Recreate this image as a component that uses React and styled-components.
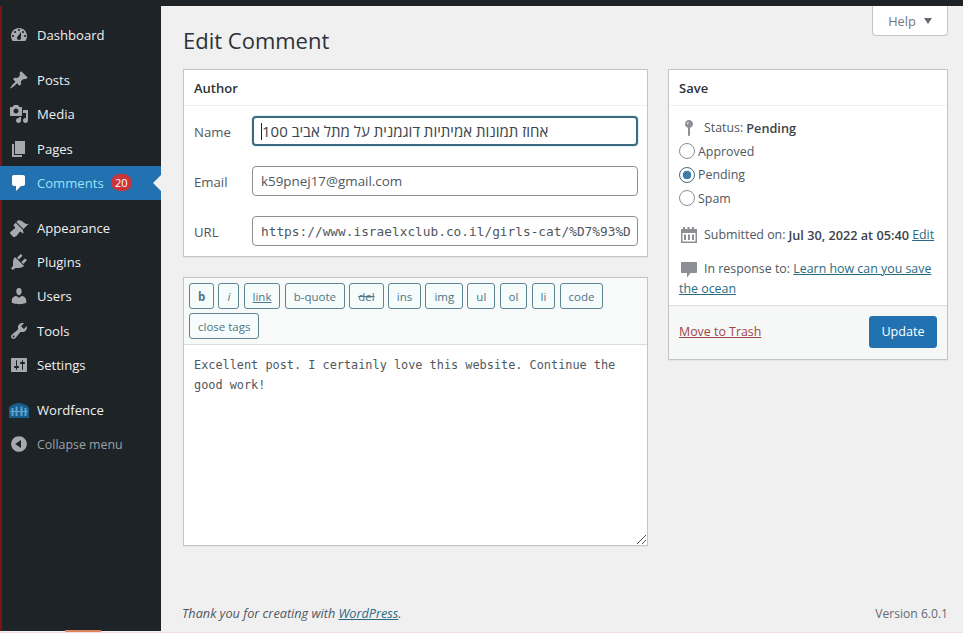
import React from "react";
import styled, { createGlobalStyle } from "styled-components";

const GlobalStyle = createGlobalStyle`
    html, body {
        margin: 0;
        padding: 0;
        height: 633px;
        overflow: hidden;
        background: #f0f0f1;
    }
    body {
        font-family: "Open Sans", "Noto Sans", sans-serif;
        font-size: 13px;
        color: #3c434a;
    }
    * {
        box-sizing: border-box;
    }
`;

const icons = {
    dashboard:
        "M3.76 16h12.48c1.1-1.37 1.76-3.11 1.76-5 0-4.42-3.58-8-8-8s-8 3.58-8 8c0 1.89.66 3.63 1.76 5zM10 4c.55 0 1 .45 1 1s-.45 1-1 1-1-.45-1-1 .45-1 1-1zM6 6c.55 0 1 .45 1 1s-.45 1-1 1-1-.45-1-1 .45-1 1-1zm8 0c.55 0 1 .45 1 1s-.45 1-1 1-1-.45-1-1 .45-1 1-1zm-5.37 5.55L12 7v6c0 1.1-.9 2-2 2s-2-.9-2-2c0-.57.24-1.08.63-1.45zM4 10c.55 0 1 .45 1 1s-.45 1-1 1-1-.45-1-1 .45-1 1-1zm12 0c.55 0 1 .45 1 1s-.45 1-1 1-1-.45-1-1 .45-1 1-1z",
    post: "M10.44 3.02l1.82-1.82 6.36 6.35-1.83 1.82c-1.05-.68-2.48-.57-3.41.36l-.75.75c-.92.93-1.04 2.35-.35 3.41l-1.83 1.82-2.41-2.41-2.8 2.79c-.42.42-3.38 2.71-3.8 2.29s1.86-3.39 2.28-3.81l2.79-2.79L4.1 9.36l1.83-1.82c1.05.69 2.48.57 3.4-.36l.75-.75c.93-.92 1.05-2.35.36-3.41z",
    media: "M13 11V4c0-.55-.45-1-1-1h-1.67L9 1H5L3.67 3H2c-.55 0-1 .45-1 1v7c0 .55.45 1 1 1h10c.55 0 1-.45 1-1zM7 4.5c1.38 0 2.5 1.12 2.5 2.5S8.38 9.5 7 9.5 4.5 8.38 4.5 7 5.62 4.5 7 4.5zM14 6h5v10.5c0 1.38-1.12 2.5-2.5 2.5S14 17.88 14 16.5s1.12-2.5 2.5-2.5c.17 0 .34.02.5.05V9h-3V6zm-4 8.05V13h2v3.5c0 1.38-1.12 2.5-2.5 2.5S7 17.88 7 16.5 8.12 14 9.5 14c.17 0 .34.02.5.05z",
    page: "M6 15V2h10v13H6zm-1 1h8v2H3V5h2v11z",
    comment:
        "M5 2h9c1.1 0 2 .9 2 2v7c0 1.1-.9 2-2 2h-2l-5 5v-5H5c-1.1 0-2-.9-2-2V4c0-1.1.9-2 2-2z",
    appearance:
        "M14.48 11.06L7.41 3.99l1.5-1.5c.5-.56 2.3-.47 3.51.32 1.21.8 1.43 1.28 2.91 2.1 1.18.64 2.45 1.26 4.45.85zm-.71.71L6.7 4.7 4.93 6.47c-.39.39-.39 1.02 0 1.41l1.06 1.06c.39.39.39 1.03 0 1.42-.6.6-1.43 1.11-2.21 1.69-.35.26-.7.53-1.01.84C1.43 13.23.4 14.91 1.1 15.6l3.3 3.3c.69.7 2.37-.33 3.71-1.67.31-.31.58-.66.84-1.01.58-.78 1.09-1.61 1.69-2.21.39-.39 1.03-.39 1.42 0l1.06 1.06c.39.39 1.02.39 1.41 0z",
    plugin: "M13.11 4.36L9.87 7.6 8 5.73l3.24-3.24c.35-.34 1.05-.2 1.56.32.52.51.66 1.21.31 1.55zm-8 1.77l.91-1.12 9.01 9.01-1.19.84c-.71.71-2.63 1.16-3.82 1.16H6.14L4.9 17.26c-.59.59-1.54.59-2.12 0-.59-.58-.59-1.53 0-2.12l1.24-1.24v-3.88c0-1.13.4-3.19 1.09-3.89zm7.26 3.97l3.24-3.24c.34-.35 1.04-.21 1.55.31.52.51.66 1.21.31 1.55l-3.24 3.25z",
    users: "M10 9.25c-2.27 0-2.73-3.44-2.73-3.44C7 4.02 7.82 2 9.97 2c2.16 0 2.98 2.02 2.71 3.81 0 0-.41 3.44-2.68 3.44zm0 2.57L12.72 10c2.39 0 4.52 2.33 4.52 4.53v2.49s-3.65 1.13-7.24 1.13c-3.65 0-7.24-1.13-7.24-1.13v-2.49c0-2.25 1.94-4.48 4.47-4.48z",
    tools: "M16.68 9.77c-1.34 1.34-3.3 1.67-4.95.99l-5.41 6.52c-.99.99-2.59.99-3.58 0s-.99-2.59 0-3.57l6.52-5.42c-.68-1.65-.35-3.61.99-4.95 1.28-1.28 3.12-1.62 4.72-1.06l-2.89 2.89 2.82 2.82 2.86-2.87c.53 1.58.18 3.39-1.08 4.65zM3.81 16.21c.4.39 1.04.39 1.43 0 .4-.4.4-1.04 0-1.43-.39-.4-1.03-.4-1.43 0-.39.39-.39 1.03 0 1.43z",
    settings:
        "M18 16V4c0-.55-.45-1-1-1H3c-.55 0-1 .45-1 1v12c0 .55.45 1 1 1h14c.55 0 1-.45 1-1zM8 11h1c.55 0 1 .45 1 1s-.45 1-1 1H8v1.5c0 .28-.22.5-.5.5s-.5-.22-.5-.5V13H6c-.55 0-1-.45-1-1s.45-1 1-1h1V5.5c0-.28.22-.5.5-.5s.5.22.5.5V11zm5-2h-1c-.55 0-1-.45-1-1s.45-1 1-1h1V5.5c0-.28.22-.5.5-.5s.5.22.5.5V7h1c.55 0 1 .45 1 1s-.45 1-1 1h-1v5.5c0 .28-.22.5-.5.5s-.5-.22-.5-.5V9z",
    collapse:
        "M10 2.16c4.33 0 7.84 3.51 7.84 7.84s-3.51 7.84-7.84 7.84S2.16 14.33 2.16 10 5.67 2.16 10 2.16zm2 11.72V6.12L6.18 9.97z",
    pin: "M14 6c0 1.86-1.28 3.41-3 3.86V17c0 .6-.4 1-1 1s-1-.4-1-1V9.86C7.28 9.41 6 7.86 6 6c0-2.21 1.79-4 4-4s4 1.79 4 4zM8.5 4.5c-.6.6-.6 1.4 0 2 .3-.9.7-1.4 1.5-1.8-.5-.4-1-.6-1.5-.2z",
    calendar:
        "M4 2h2v2h2.5V2h2v2H13V2h2v2h3v14H2V4h2V2zM3.5 8v8.5h13V8h-13zM5 9.5h2V15H5V9.5zm4 0h2V15H9V9.5zm4 0h2V15h-2V9.5z",
    bubble: "M3 3h14c.6 0 1 .4 1 1v9c0 .6-.4 1-1 1h-5.5L8 18.5V14H3c-.6 0-1-.4-1-1V4c0-.6.4-1 1-1z",
};

const Page = styled.div`
    position: relative;
    display: flex;
    flex-direction: column;
    height: 633px;
    border-bottom: 1px solid #fbdcdc;
`;

const TopBar = styled.div`
    height: 6px;
    flex: none;
    background: #1d2327;
`;

const Body = styled.div`
    flex: 1;
    display: flex;
    min-height: 0;
`;

const Sidebar = styled.nav`
    width: 161px;
    flex: none;
    margin-bottom: 1px;
    background: #1d2327;
    border-left: 2px solid #7c1416;
    padding-top: 12px;
`;

const ScrollThumb = styled.span`
    position: absolute;
    left: 65px;
    bottom: 0;
    width: 36px;
    height: 2px;
    background: #d9835f;
`;

const MenuItem = styled.a`
    position: relative;
    display: flex;
    align-items: center;
    height: 34.3px;
    margin-left: -2px;
    margin-bottom: ${(p) => (p.$gapAfter ? "10.6px" : "0")};
    padding-left: 9px;
    font-size: ${(p) => (p.$muted ? "12.4px" : "13.1px")};
    color: ${(p) => (p.$active ? "#9be3f7" : p.$muted ? "#9ca1a7" : "#f0f0f1")};
    background: ${(p) => (p.$active ? "#2271b1" : "transparent")};

    ${(p) =>
        p.$active &&
        `
        &::after {
            content: "";
            position: absolute;
            right: 0;
            top: 50%;
            margin-top: -8px;
            border: 8px solid transparent;
            border-right-color: #f0f0f1;
        }
    `}
`;

const MenuIcon = styled.svg`
    width: 20px;
    height: 20px;
    flex: none;
    margin-right: 8px;
    fill: ${(p) => (p.$active ? "#ffffff" : "#a7aaad")};
`;

const Badge = styled.span`
    display: inline-flex;
    align-items: center;
    justify-content: center;
    width: 21px;
    height: 17px;
    margin-left: 7px;
    border-radius: 9px;
    background: #c9353a;
    color: #fff;
    font-size: 11px;
`;

const Main = styled.main`
    flex: 1;
    min-width: 0;
    display: flex;
    flex-direction: column;
    padding: 0 15px 0 22px;
`;

const Header = styled.div`
    display: flex;
    justify-content: space-between;
    align-items: flex-start;
    height: 63px;
`;

const Title = styled.h1`
    margin: 17px 0 0;
    font-size: 22px;
    font-weight: 400;
    line-height: 34px;
    color: #2c3338;
`;

const HelpTab = styled.button`
    display: flex;
    align-items: center;
    justify-content: center;
    gap: 8px;
    width: 76px;
    height: 30px;
    padding: 0;
    background: #fff;
    border: 1px solid #c3c4c7;
    border-top: none;
    border-radius: 0 0 4px 4px;
    font: inherit;
    font-size: 12.8px;
    color: #72777c;

    &::after {
        content: "";
        border: 4.5px solid transparent;
        border-top: 6px solid #646970;
        border-bottom: none;
    }
`;

const Columns = styled.div`
    flex: 1;
    display: flex;
    gap: 20px;
    align-items: flex-start;
`;

const LeftColumn = styled.div`
    width: 465px;
    display: flex;
    flex-direction: column;
    gap: 20px;
`;

const Panel = styled.section`
    width: ${(p) => p.$width || "auto"};
    background: #fff;
    border: 1px solid #c3c4c7;
    box-shadow: 0 1px 1px rgba(0, 0, 0, 0.04);
`;

const PanelTitle = styled.h2`
    margin: 0;
    height: 36px;
    padding: 0 10px;
    font-size: 13px;
    font-weight: 600;
    line-height: 36px;
    color: #2c3338;
    border-bottom: 1px solid #f0f0f1;
`;

const AuthorFields = styled.div`
    display: flex;
    flex-direction: column;
    gap: 20px;
    padding: 10px 9px 10px 10px;
`;

const FieldRow = styled.label`
    display: flex;
    align-items: center;
`;

const FieldLabel = styled.span`
    width: 58px;
    flex: none;
    padding-top: 1px;
    font-size: 13.2px;
    color: #50575e;
`;

const TextBox = styled.div`
    flex: 1;
    min-width: 0;
    height: 30px;
    display: flex;
    align-items: center;
    padding: 0 8px;
    overflow: hidden;
    white-space: nowrap;
    background: #fff;
    border: 1px solid #8c8f94;
    border-radius: 4px;
    font-family: ${(p) =>
        p.$mono ? '"DejaVu Sans Mono", monospace' : "inherit"};
    font-size: ${(p) => (p.$mono ? "12.8px" : "13.4px")};
    color: #50575e;

    ${(p) =>
        p.$focused &&
        `
        border: 2px solid #3a6b7e;
        box-shadow: 0 0 0 1px #dff1f5;
        padding: 0 7px;
    `}
`;

const Caret = styled.span`
    width: 1px;
    height: 17px;
    flex: none;
    background: #1d2327;
`;

const HebrewValue = styled.span`
    font-size: 15px;
    color: #3c434a;
`;

const Toolbar = styled.div`
    display: flex;
    flex-wrap: wrap;
    gap: 4.2px;
    min-height: 67px;
    padding: 5px 5px 0;
    align-content: flex-start;
    background: #f8f9f9;
    border-bottom: 1px solid #dcdcde;
`;

const QuickTag = styled.button`
    height: 26px;
    padding: 0 ${(p) => p.$pad || 8}px;
    background: #f6fbfb;
    border: 1px solid #5d8593;
    border-radius: 3px;
    font-family: inherit;
    font-size: 11.5px;
    font-weight: ${(p) => (p.$bold ? 700 : 400)};
    font-style: ${(p) => (p.$italic ? "italic" : "normal")};
    text-decoration: ${(p) => p.$decoration || "none"};
    color: #4f7686;
`;

const EditorArea = styled.div`
    position: relative;
    height: 200px;
    padding: 10px;
    font-family: "DejaVu Sans Mono", monospace;
    font-size: 11.86px;
    line-height: 20px;
    color: #50575e;
`;

const ResizeGrip = styled.svg`
    position: absolute;
    right: 1px;
    bottom: 1px;
    width: 10px;
    height: 10px;
    stroke: #50575e;
    stroke-width: 1;
`;

const StatusBlock = styled.div`
    padding: 12px 10px 0;
`;

const InfoLine = styled.div`
    display: flex;
    align-items: center;
    font-size: 12.4px;
    line-height: 20px;
    color: #50575e;
    margin-top: ${(p) => p.$top || 0}px;
`;

const InfoIcon = styled.svg`
    width: 20px;
    height: 20px;
    flex: none;
    margin-right: 5px;
    fill: #8c8f94;
`;

const Strong = styled.b`
    font-weight: 600;
    font-size: 12.7px;
    color: #3c434a;
    margin-left: 3px;
`;

const RadioGroup = styled.div`
    display: flex;
    flex-direction: column;
    gap: 3.5px;
    margin-top: 3px;
`;

const RadioRow = styled.label`
    display: flex;
    align-items: center;
    gap: 3px;
    height: 20px;
    font-size: 12.4px;
    color: #50575e;
`;

const RadioDot = styled.span`
    width: 16px;
    height: 16px;
    flex: none;
    border-radius: 50%;
    border: 1px solid ${(p) => (p.$checked ? "#3e6f80" : "#8c8f94")};
    background: ${(p) =>
        p.$checked
            ? "radial-gradient(circle, #3c7ba3 0 4px, #fff 4.6px)"
            : "#fff"};
`;

const Link = styled.a`
    color: #2a6b83;
    text-decoration: underline;
`;

const ResponseText = styled.div`
    margin-top: 14px;
    font-size: 12.4px;
    line-height: 20px;
    color: #50575e;
`;

const InlineIcon = styled(InfoIcon)`
    display: inline-block;
    vertical-align: top;
`;

const PanelFooter = styled.div`
    display: flex;
    align-items: center;
    justify-content: space-between;
    height: 54px;
    margin-top: 6px;
    padding: 0 10px 2px;
    background: #f6f7f7;
    border-top: 1px solid #dcdcde;
`;

const TrashLink = styled.a`
    font-size: 12.4px;
    color: #a0464a;
    text-decoration: underline;
`;

const UpdateButton = styled.button`
    width: 68px;
    height: 32px;
    padding: 0;
    background: #2271b1;
    border: 1px solid #2271b1;
    border-radius: 3px;
    font-family: inherit;
    font-size: 12.6px;
    color: #fff;
`;

const Footer = styled.footer`
    display: flex;
    justify-content: space-between;
    align-items: center;
    height: 20px;
    margin: 0 0 9px -1px;
    font-size: 12.7px;
    color: #50575e;
`;

const FooterNote = styled.em`
    font-style: italic;
`;

const FooterVersion = styled.span`
    font-size: 12.1px;
    color: #646970;
`;

const WordfenceSvg = styled(MenuIcon)`
    fill: #175d8d;
`;

const Icon = ({ name, active }) => (
    <MenuIcon viewBox="0 0 20 20" $active={active}>
        <path fillRule="evenodd" d={icons[name]} />
    </MenuIcon>
);

const WordfenceIcon = () => (
    <WordfenceSvg viewBox="0 0 20 20">
        <path d="M0 18V7.5C2 5 3.5 4.5 5 4.5 7 2.5 13 2.5 15 4.5c1.5 0 3 .5 5 3V18H0z" />
        <path
            fill="#5fa4cc"
            d="M2.5 8h2v8h-2V8zm4-1.5h2V16h-2V6.5zm5 0h2V16h-2V6.5zm4 1.5h2v8h-2V8zM1 11h18v1H1v-1z"
        />
    </WordfenceSvg>
);

const menu = [
    { name: "dashboard", label: "Dashboard", gapAfter: true },
    { name: "post", label: "Posts" },
    { name: "media", label: "Media" },
    { name: "page", label: "Pages" },
    { name: "comment", label: "Comments", active: true, badge: 20, gapAfter: true },
    { name: "appearance", label: "Appearance" },
    { name: "plugin", label: "Plugins" },
    { name: "users", label: "Users" },
    { name: "tools", label: "Tools" },
    { name: "settings", label: "Settings", gapAfter: true },
    { name: "wordfence", label: "Wordfence" },
    { name: "collapse", label: "Collapse menu", muted: true },
];

const quickTags = [
    { label: "b", bold: true, pad: 8 },
    { label: "i", italic: true, pad: 8 },
    { label: "link", decoration: "underline" },
    { label: "b-quote" },
    { label: "del", decoration: "line-through" },
    { label: "ins" },
    { label: "img" },
    { label: "ul" },
    { label: "ol" },
    { label: "li" },
    { label: "code" },
    { label: "close tags" },
];

const App = () => (
    <Page>
        <GlobalStyle />
        <TopBar />
        <Body>
            <Sidebar>
                {menu.map((item) => (
                    <MenuItem
                        key={item.label}
                        $active={item.active}
                        $muted={item.muted}
                        $gapAfter={item.gapAfter}
                    >
                        {item.name === "wordfence" ? (
                            <WordfenceIcon />
                        ) : (
                            <Icon name={item.name} active={item.active} />
                        )}
                        {item.label}
                        {item.badge ? <Badge>{item.badge}</Badge> : null}
                    </MenuItem>
                ))}
            </Sidebar>
            <Main>
                <Header>
                    <Title>Edit Comment</Title>
                    <HelpTab>Help</HelpTab>
                </Header>
                <Columns>
                    <LeftColumn>
                        <Panel>
                            <PanelTitle>Author</PanelTitle>
                            <AuthorFields>
                                <FieldRow>
                                    <FieldLabel>Name</FieldLabel>
                                    <TextBox $focused>
                                        <Caret />
                                        <HebrewValue dir="rtl">
                                            אחוז תמונות אמיתיות דוגמנית על מתל אביב 100
                                        </HebrewValue>
                                    </TextBox>
                                </FieldRow>
                                <FieldRow>
                                    <FieldLabel>Email</FieldLabel>
                                    <TextBox>k59pnej17@gmail.com</TextBox>
                                </FieldRow>
                                <FieldRow>
                                    <FieldLabel>URL</FieldLabel>
                                    <TextBox $mono>
                                        https://www.israelxclub.co.il/girls-cat/%D7%93%D
                                    </TextBox>
                                </FieldRow>
                            </AuthorFields>
                        </Panel>
                        <Panel>
                            <Toolbar>
                                {quickTags.map((tag) => (
                                    <QuickTag
                                        key={tag.label}
                                        $bold={tag.bold}
                                        $italic={tag.italic}
                                        $pad={tag.pad}
                                        $decoration={tag.decoration}
                                    >
                                        {tag.label}
                                    </QuickTag>
                                ))}
                            </Toolbar>
                            <EditorArea>
                                Excellent post. I certainly love this website. Continue the good work!
                                <ResizeGrip viewBox="0 0 10 10">
                                    <line x1="1" y1="10" x2="10" y2="1" />
                                    <line x1="6" y1="10" x2="10" y2="6" />
                                </ResizeGrip>
                            </EditorArea>
                        </Panel>
                    </LeftColumn>
                    <Panel $width="280px">
                        <PanelTitle>Save</PanelTitle>
                        <StatusBlock>
                            <InfoLine>
                                <InfoIcon viewBox="0 0 20 20">
                                    <path fillRule="evenodd" d={icons.pin} />
                                </InfoIcon>
                                Status:<Strong>Pending</Strong>
                            </InfoLine>
                            <RadioGroup>
                                <RadioRow>
                                    <RadioDot />
                                    Approved
                                </RadioRow>
                                <RadioRow>
                                    <RadioDot $checked />
                                    Pending
                                </RadioRow>
                                <RadioRow>
                                    <RadioDot />
                                    Spam
                                </RadioRow>
                            </RadioGroup>
                            <InfoLine $top={17}>
                                <InfoIcon viewBox="0 0 20 20">
                                    <path fillRule="evenodd" d={icons.calendar} />
                                </InfoIcon>
                                Submitted on:<Strong>Jul 30, 2022 at 05:40</Strong>
                                &nbsp;<Link>Edit</Link>
                            </InfoLine>
                            <ResponseText>
                                <InlineIcon viewBox="0 0 20 20">
                                    <path d={icons.bubble} />
                                </InlineIcon>
                                In response to: <Link>Learn how can you save the ocean</Link>
                            </ResponseText>
                        </StatusBlock>
                        <PanelFooter>
                            <TrashLink>Move to Trash</TrashLink>
                            <UpdateButton>Update</UpdateButton>
                        </PanelFooter>
                    </Panel>
                </Columns>
                <Footer>
                    <FooterNote>
                        Thank you for creating with <Link>WordPress</Link>.
                    </FooterNote>
                    <FooterVersion>Version 6.0.1</FooterVersion>
                </Footer>
            </Main>
        </Body>
        <ScrollThumb />
    </Page>
);

export default App;
